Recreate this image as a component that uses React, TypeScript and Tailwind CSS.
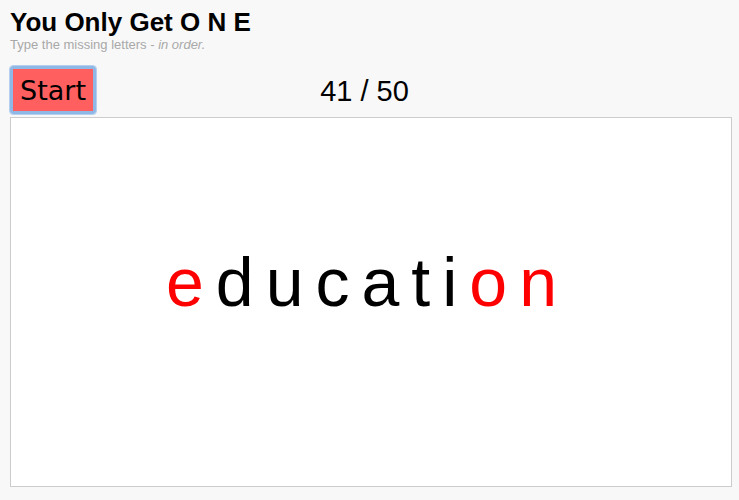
import React from 'react';

const letters: { ch: string; red: boolean }[] = [
  { ch: 'e', red: true },
  { ch: 'd', red: false },
  { ch: 'u', red: false },
  { ch: 'c', red: false },
  { ch: 'a', red: false },
  { ch: 't', red: false },
  { ch: 'i', red: false },
  { ch: 'o', red: true },
  { ch: 'n', red: true },
];

export default function App() {
  return (
    <div className="min-h-[500px] w-full bg-[#f8f8f8] px-[10px] pt-[8px] pb-[12px] font-['Liberation_Sans',Arial,sans-serif]">
      {/* Header */}
      <h1 className="text-[26px] font-bold leading-[29px] text-black">You Only Get O N E</h1>
      <p className="text-[13px] leading-[15px] text-[#a8a8a8]">
        Type the missing letters - <i>in order.</i>
      </p>

      {/* Controls */}
      <div className="relative mt-[14px] flex h-[48px] items-center">
        <button className="flex h-[48px] w-[86px] items-center justify-center rounded-[3px] border-[3px] border-[#8fb8e6] bg-[#ff5f5f] p-0 font-['DejaVu_Sans',sans-serif] text-[27px] leading-none text-black outline outline-1 outline-[#b5cfee]">
          <span className="block pt-[1px]">Start</span>
        </button>
        <div className="pointer-events-none absolute left-0 right-0 top-[9px] text-center text-[29px] leading-[32px] text-black">
          <span className="relative left-[-5px]">41 / 50</span>
        </div>
      </div>

      {/* Word board */}
      <div className="mt-[3px] flex h-[370px] w-[722px] justify-center border border-[#cccccc] bg-white pr-[19px] pt-[126px]">
        <div className="flex h-[78px] gap-[12px] text-[68px] leading-[76px]">
          {letters.map((l, i) => (
            <span key={i} className={l.red ? 'text-[#ff0000]' : 'text-black'}>
              {l.ch}
            </span>
          ))}
        </div>
      </div>
    </div>
  );
}
